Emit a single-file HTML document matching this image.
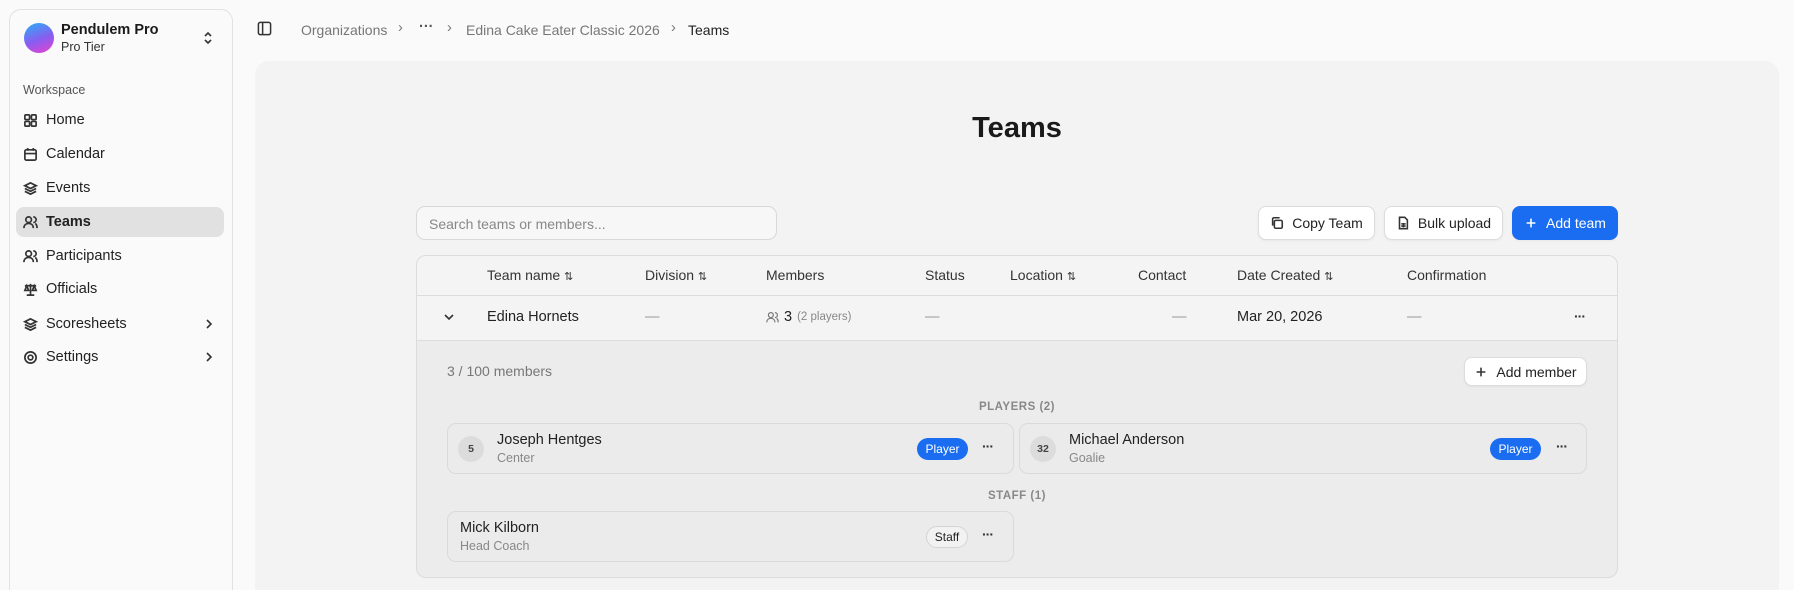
<!DOCTYPE html>
<html style="width:1794px;height:590px;overflow:hidden"><head><meta charset="utf-8"><style>
*{box-sizing:border-box;margin:0;padding:0}
body{width:1794px;height:590px;overflow:hidden;background:#fafafa;font-family:"Liberation Sans",sans-serif;color:#1a1a1a;position:relative;font-size:14.5px}
.a{position:absolute;white-space:nowrap}
.side{position:absolute;left:9px;top:9px;width:224px;height:581px;border:1px solid #e2e2e2;border-bottom:none;border-radius:12px 12px 0 0;background:#fafafa}
.nav{position:absolute;left:23px;display:flex;align-items:center;gap:8px;font-size:14.5px;color:#222}
.nav svg{width:15px;height:15px;stroke:#333;fill:none;stroke-width:1.8}
.panel{position:absolute;left:255px;top:61px;width:1524px;height:529px;background:#f3f3f3;border-radius:14px 14px 0 0}
.btn{position:absolute;top:206px;height:34px;border:1px solid #dcdcdc;border-radius:8px;background:#fff;display:flex;align-items:center;justify-content:center;gap:8px;font-size:14px;color:#222;box-shadow:0 1px 2px rgba(0,0,0,.05)}
.btn svg{width:14px;height:14px;stroke:#333;fill:none;stroke-width:1.8}
.th{position:absolute;top:267px;font-size:14px;color:#333}
.td{position:absolute;top:309px;font-size:14.5px;color:#222}
.dash{color:#999}
.card{position:absolute;height:51px;border:1px solid #dadada;border-radius:9px;background:#ebebeb}
.num{position:absolute;left:10px;top:12px;width:26px;height:26px;border-radius:50%;background:#dcdcdc;font-size:10.5px;font-weight:bold;color:#444;display:flex;align-items:center;justify-content:center}
.nm{position:absolute;top:8px;font-size:14.5px;color:#222}
.sub{position:absolute;top:27px;font-size:12.5px;color:#888}
.pill{position:absolute;top:14px;height:22px;border-radius:11px;font-size:12px;display:flex;align-items:center;justify-content:center}
.dots{position:absolute;font-size:14px;font-weight:bold;color:#333;letter-spacing:-1px}
.sec{position:absolute;left:416px;width:1202px;text-align:center;font-size:11.5px;font-weight:bold;color:#888;letter-spacing:.5px}
.clip{position:absolute;left:0;top:0;width:1794px;height:590px;overflow:hidden}
</style></head><body><div class="clip">
<div class="side"></div>
<div class="a" style="left:24px;top:23px;width:30px;height:30px;border-radius:50%;background:linear-gradient(160deg,#3aa0f5 10%,#8a5cf0 55%,#e044d0 95%)"></div>
<div class="a" style="left:61px;top:22px;font-size:14.5px;font-weight:bold">Pendulem Pro</div>
<div class="a" style="left:61px;top:40px;font-size:12.5px;color:#333">Pro Tier</div>
<svg class="a" style="left:202px;top:30px" width="12" height="16" viewBox="0 0 12 16" fill="none" stroke="#333" stroke-width="1.6"><path d="M3 6l3-3 3 3M3 10l3 3 3-3"/></svg>
<div class="a" style="left:23px;top:83px;font-size:12.5px;color:#555">Workspace</div>
<div class="a" style="left:16px;top:207px;width:208px;height:30px;background:#e1e1e1;border-radius:8px"></div>
<div class="nav" style="top:112px"><svg viewBox="0 0 16 16"><rect x="2" y="2" width="5" height="5" rx="1"/><rect x="9" y="2" width="5" height="5" rx="1"/><rect x="2" y="9" width="5" height="5" rx="1"/><rect x="9" y="9" width="5" height="5" rx="1"/></svg>Home</div>
<div class="nav" style="top:146px"><svg viewBox="0 0 16 16"><rect x="2" y="3" width="12" height="11" rx="1.5"/><path d="M2 7h12M5 1v3M11 1v3"/></svg>Calendar</div>
<div class="nav" style="top:180px"><svg viewBox="0 0 16 16"><path d="M8 2l6 3-6 3-6-3z M2 8l6 3 6-3M2 11l6 3 6-3"/></svg>Events</div>
<div class="nav" style="top:214px;font-weight:bold"><svg viewBox="0 0 16 16"><circle cx="6" cy="5" r="3"/><path d="M1 14c0-3 2-5 5-5s5 2 5 5M11 2a3 3 0 0 1 0 6M13 9c1.5 1 2 3 2 5"/></svg>Teams</div>
<div class="nav" style="top:248px"><svg viewBox="0 0 16 16"><circle cx="6" cy="5" r="3"/><path d="M1 14c0-3 2-5 5-5s5 2 5 5M11 2a3 3 0 0 1 0 6M13 9c1.5 1 2 3 2 5"/></svg>Participants</div>
<div class="nav" style="top:281px"><svg viewBox="0 0 16 16"><path d="M8 2v12M4 14h8M2 4h12M4 4l-2 5h4zM12 4l-2 5h4z"/></svg>Officials</div>
<div class="nav" style="top:316px"><svg viewBox="0 0 16 16"><path d="M8 2l6 3-6 3-6-3z M2 8l6 3 6-3M2 11l6 3 6-3"/></svg>Scoresheets</div>
<div class="nav" style="top:349px"><svg viewBox="0 0 16 16"><circle cx="8" cy="8" r="2.5"/><circle cx="8" cy="8" r="6"/></svg>Settings</div>
<svg class="a" style="left:204px;top:318px" width="10" height="12" viewBox="0 0 10 12" fill="none" stroke="#333" stroke-width="1.6"><path d="M3 2l4 4-4 4"/></svg>
<svg class="a" style="left:204px;top:351px" width="10" height="12" viewBox="0 0 10 12" fill="none" stroke="#333" stroke-width="1.6"><path d="M3 2l4 4-4 4"/></svg>

<svg class="a" style="left:257px;top:21px" width="15" height="15" viewBox="0 0 16 16" fill="none" stroke="#333" stroke-width="1.6"><rect x="1.5" y="1.5" width="13" height="13" rx="2"/><path d="M6 2v12"/></svg>
<div class="a" style="left:301px;top:22px;font-size:14px;color:#777">Organizations</div>
<div class="a" style="left:398px;top:20px;color:#777">›</div>
<div class="a" style="left:419px;top:19px;color:#555;font-weight:bold">···</div>
<div class="a" style="left:447px;top:20px;color:#777">›</div>
<div class="a" style="left:466px;top:22px;font-size:14px;color:#777">Edina Cake Eater Classic 2026</div>
<div class="a" style="left:671px;top:20px;color:#777">›</div>
<div class="a" style="left:688px;top:22px;font-size:14px;color:#222">Teams</div>

<div class="panel"></div>
<div class="a" style="left:416px;width:1202px;top:112px;text-align:center;font-size:29px;font-weight:bold">Teams</div>
<div class="a" style="left:416px;top:206px;width:361px;height:34px;border:1px solid #d8d8d8;border-radius:9px;background:#f7f7f7;padding:9px 12px;font-size:14px;color:#888">Search teams or members...</div>
<div class="btn" style="left:1258px;width:117px"><svg viewBox="0 0 16 16"><rect x="5" y="5" width="9" height="9" rx="1.5"/><path d="M3 11V3.5A1.5 1.5 0 0 1 4.5 2H11"/></svg>Copy Team</div>
<div class="btn" style="left:1384px;width:119px"><svg viewBox="0 0 16 16"><path d="M4 1.5h6l3 3v10H4z M6 9h5M6 11.5h5M8.5 8v5"/></svg>Bulk upload</div>
<div class="btn" style="left:1512px;width:106px;background:#1a6df0;border-color:#1a6df0;color:#fff"><svg viewBox="0 0 16 16" style="stroke:#fff"><path d="M8 3v10M3 8h10"/></svg>Add team</div>

<div class="a" style="left:416px;top:255px;width:1202px;height:323px;border:1px solid #dcdcdc;border-radius:10px;background:#ececec;overflow:hidden">
<div style="height:40px;background:#f4f4f4;border-bottom:1px solid #dcdcdc"></div>
<div style="height:45px;background:#f4f4f4;border-bottom:1px solid #dcdcdc"></div>
</div>
<div class="th" style="left:487px">Team name <span style="font-size:11px">⇅</span></div>
<div class="th" style="left:645px">Division <span style="font-size:11px">⇅</span></div>
<div class="th" style="left:766px">Members</div>
<div class="th" style="left:925px">Status</div>
<div class="th" style="left:1010px">Location <span style="font-size:11px">⇅</span></div>
<div class="th" style="left:1138px">Contact</div>
<div class="th" style="left:1237px">Date Created <span style="font-size:11px">⇅</span></div>
<div class="th" style="left:1407px">Confirmation</div>

<svg class="a" style="left:443px;top:312px" width="12" height="10" viewBox="0 0 12 10" fill="none" stroke="#333" stroke-width="1.6"><path d="M2 3l4 4 4-4"/></svg>
<div class="td" style="left:487px">Edina Hornets</div>
<div class="td dash" style="left:645px">—</div>
<div class="td" style="left:766px;display:flex;align-items:center;gap:5px"><svg width="13" height="13" viewBox="0 0 16 16" fill="none" stroke="#777" stroke-width="1.5"><circle cx="6" cy="5" r="3"/><path d="M1 14c0-3 2-5 5-5s5 2 5 5M11 2a3 3 0 0 1 0 6M13 9c1.5 1 2 3 2 5"/></svg>3 <span style="font-size:11.5px;color:#888">(2 players)</span></div>
<div class="td dash" style="left:925px">—</div>
<div class="td dash" style="left:1172px">—</div>
<div class="td" style="left:1237px">Mar 20, 2026</div>
<div class="td dash" style="left:1407px">—</div>
<div class="dots" style="left:1574px;top:308px">···</div>

<div class="a" style="left:447px;top:363px;font-size:14px;color:#777">3 / 100 members</div>
<div class="btn" style="left:1464px;top:357px;height:29px;width:123px"><svg viewBox="0 0 16 16"><path d="M8 3v10M3 8h10"/></svg>Add member</div>

<div class="sec" style="top:401px">PLAYERS (2)</div>
<div class="card" style="left:447px;top:423px;width:567px">
<div class="num">5</div><div class="nm" style="left:49px">Joseph Hentges</div><div class="sub" style="left:49px">Center</div>
<div class="pill" style="left:469px;width:51px;background:#1a6df0;color:#fff">Player</div>
<div class="dots" style="left:534px;top:14px">···</div></div>
<div class="card" style="left:1019px;top:423px;width:568px">
<div class="num">32</div><div class="nm" style="left:49px">Michael Anderson</div><div class="sub" style="left:49px">Goalie</div>
<div class="pill" style="left:470px;width:51px;background:#1a6df0;color:#fff">Player</div>
<div class="dots" style="left:536px;top:14px">···</div></div>

<div class="sec" style="top:490px">STAFF (1)</div>
<div class="card" style="left:447px;top:511px;width:567px">
<div class="nm" style="left:12px">Mick Kilborn</div><div class="sub" style="left:12px">Head Coach</div>
<div class="pill" style="left:478px;width:42px;background:#f2f2f2;border:1px solid #d4d4d4;color:#222">Staff</div>
<div class="dots" style="left:534px;top:14px">···</div></div>
</div></body></html>
